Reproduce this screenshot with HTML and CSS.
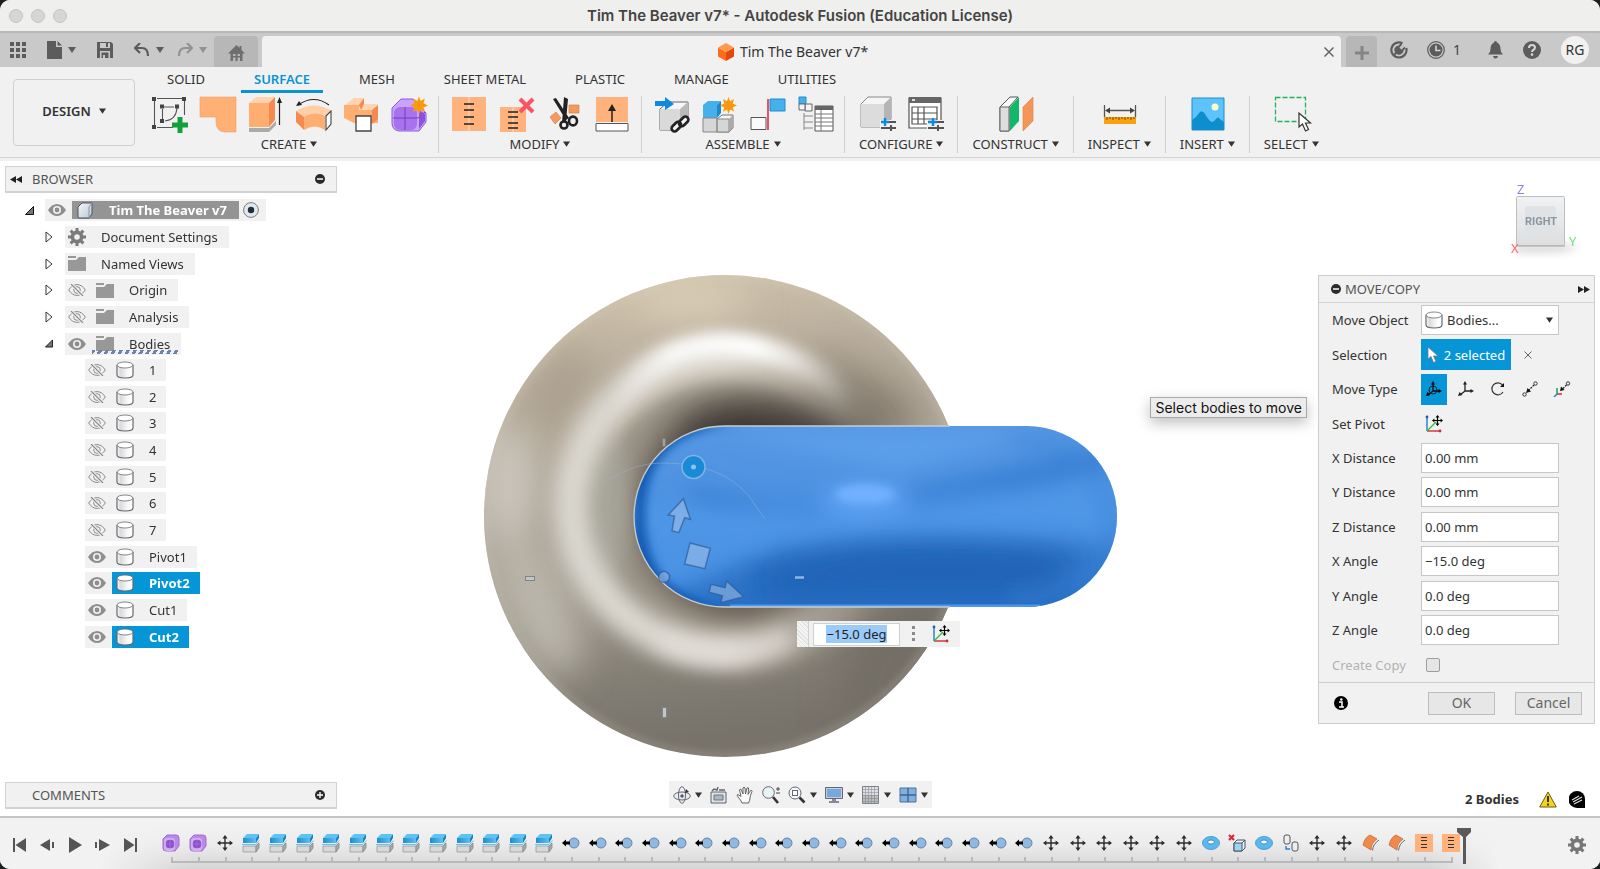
FILE: index.html
```html
<!DOCTYPE html>
<html lang="en">
<head>
<meta charset="utf-8">
<title>Tim The Beaver v7* - Autodesk Fusion (Education License)</title>
<link rel="stylesheet" href="styles.css">
</head>
<body>
<svg class="defs" aria-hidden="true">
  <defs>
    <linearGradient id="gBlue" x1="0" y1="0" x2="1" y2="0"><stop offset="0" stop-color="#1b8fd0"/><stop offset="1" stop-color="#5cc0f0"/></linearGradient>
    <linearGradient id="gCyl" x1="0" y1="0" x2="1" y2="0"><stop offset="0" stop-color="#fff"/><stop offset=".2" stop-color="#d9dadd"/><stop offset=".7" stop-color="#fbfbfb"/><stop offset="1" stop-color="#fff"/></linearGradient>
    <linearGradient id="gCube" x1="0" y1="0" x2="1" y2="1"><stop offset="0" stop-color="#f4f7fa"/><stop offset="1" stop-color="#b9c6d4"/></linearGradient>
  </defs>
  <symbol id="caret" viewBox="0 0 8 6"><path d="M0 0h8L4 6z" fill="currentColor"/></symbol>
  <symbol id="eye" viewBox="0 0 18 12"><path d="M0 6C5-2 13-2 18 6 13 14 5 14 0 6z" fill="#8e8e8e"/><circle cx="9" cy="6" r="4" fill="#f1f1f1"/><circle cx="9" cy="6" r="2.400" fill="#8e8e8e"/></symbol>
  <symbol id="eyeoff" viewBox="0 0 18 12"><path d="M.7 6C5-1.2 13-1.2 17.300 6 13 13.200 5 13.200.7 6z" fill="none" stroke="#8a8a8a"/><circle cx="9" cy="6" r="3.300" fill="none" stroke="#8a8a8a"/><path d="M3 0l12 12" stroke="#f1f1f1" stroke-width="3"/><path d="M3 0l12 12" stroke="#8a8a8a" stroke-width="1.200"/></symbol>
  <symbol id="folder" viewBox="0 0 18 15"><path d="M0 0h8v2H0zM0 4h8l3-3h7v14H0z" fill="#989898"/></symbol>
  <symbol id="cyl" viewBox="0 0 18 18"><path d="M1 4v10c0 4 16 4 16 0V4" fill="url(#gCyl)" stroke="#66696d" stroke-width="1.200"/><ellipse cx="9" cy="4" rx="8" ry="3" fill="#fff" stroke="#66696d" stroke-width=".8"/></symbol>
  <symbol id="closed" viewBox="0 0 8 12"><path d="M1 1l6 5-6 5z" fill="#fff" stroke="#333" stroke-width="1"/></symbol>
  <symbol id="open" viewBox="0 0 9 9"><path d="M8.500 .5v8H.5z" fill="#777" stroke="#111"/></symbol>
  <symbol id="gear" viewBox="0 0 18 18"><circle cx="9" cy="9" r="4.600" fill="none" stroke="currentColor" stroke-width="3.600"/><path d="M9 0v4M9 14v4M0 9h4M14 9h4M2.600 2.600l3 3M12.400 12.400l3 3M2.600 15.400l3-3M12.400 5.600l3-3" stroke="currentColor" stroke-width="3"/></symbol>
  <symbol id="move" viewBox="0 0 16 16"><path d="M8 2v12M2 8h12" stroke="#2b2b2b" stroke-width="1.400"/><path d="M8 0l2.600 3.400H5.400zM8 16l2.600-3.400H5.400zM0 8l3.400-2.600v5.200zM16 8l-3.400-2.600v5.200z" fill="#2b2b2b"/></symbol>
  <symbol id="form" viewBox="0 0 18 18"><path d="M5 1h9q3 0 3 3v8l-4 5H4q-3 0-3-3V5z" fill="#b98ae6" stroke="#9d6bd2"/><rect x="2" y="4" width="11" height="13" rx="3" fill="#cfaef2"/><rect x="4" y="6" width="8" height="8" rx="2.500" fill="#8e50cc"/><path d="M8 5v10M3 10h10" stroke="#a874dc" stroke-width=".7"/></symbol>
  <symbol id="split" viewBox="0 0 18 20"><path d="M1 5h13v5H1z" fill="url(#gBlue)"/><path d="M14 5l3-4v4l-3 5z" fill="#1583c4"/><path d="M5 1h12l-3 4H1z" fill="#5ec2f2"/><path d="M0 11.500h14l3.500-4" fill="none" stroke="#6cc0ec"/><path d="M1 13h13v6H1z" fill="#d8d8d8" stroke="#999" stroke-width=".8"/><path d="M14 13l3-3v5l-3 4z" fill="#aaa" stroke="#888" stroke-width=".8"/></symbol>
  <symbol id="joint" viewBox="0 0 18 12"><circle cx="12" cy="6" r="5" fill="#8fb8e3" stroke="#6385a8"/><path d="M0 6l4-3.500v2h4v3H4v2z" fill="#000"/></symbol>
  <symbol id="torus" viewBox="0 0 18 14"><ellipse cx="9" cy="7" rx="8.500" ry="6.500" fill="#5bb8ee" stroke="#2f94d0" stroke-width=".8"/><ellipse cx="9" cy="6" rx="3.400" ry="2" fill="#fff" stroke="#2277ad" stroke-width=".8"/></symbol>
  <symbol id="remove" viewBox="0 0 18 18"><path d="M1 1l5 5M6 1L1 6" stroke="#d22b3a" stroke-width="2.200"/><path d="M6 9l3-3h8v8l-3 3H6z" fill="#eef3f7" stroke="#456"/><path d="M6 9h8v8H6z" fill="#9ed3f2" stroke="#456"/><path d="M14 9l3-3" stroke="#456"/></symbol>
  <symbol id="copy" viewBox="0 0 18 18"><rect x="2" y="1" width="6" height="9" rx="2" fill="#eee" stroke="#555"/><rect x="10" y="8" width="6" height="9" rx="2" fill="#eee" stroke="#555"/><path d="M4 12v3h4" fill="none" stroke="#2f7fc8" stroke-width="1.400"/></symbol>
  <symbol id="patch" viewBox="0 0 18 18"><path d="M1 11Q3 3 8 1l7 4Q9 9 9 16z" fill="#f08a4a" stroke="#c96a30" stroke-width=".8"/><path d="M10.500 16.500Q11 10 17 6" fill="none" stroke="#666"/></symbol>
  <symbol id="stitch" viewBox="0 0 36 36"><path d="M1 1h34v34H1z" fill="#ffb27c"/><path d="M18 1v34" stroke="#f6ddc9"/><path d="M13 8h10M13 14h10M13 21h10M13 28h10" stroke="#222" stroke-width="1.600"/></symbol>
  <symbol id="stitchsm" viewBox="0 0 18 18"><path d="M0 0h18v18H0z" fill="#ffb27c"/><path d="M6 3.500h6M6 6.500h6M6 10.500h6M6 13.500h6" stroke="#333" stroke-width="1"/></symbol>
  <symbol id="pivot" viewBox="0 0 18 18"><path d="M2 16V2" stroke="#1f7fd0" stroke-width="1.400"/><circle cx="2" cy="2" r="1.400" fill="#1f5fae"/><path d="M2 16h13" stroke="#d2283c" stroke-width="1.400"/><circle cx="15" cy="16" r="1.400" fill="#d2283c"/><path d="M2 16L11 7" stroke="#2fc02f" stroke-width="1.200"/><path d="M12.500 1v9M8 5.500h9" stroke="#000" stroke-width="1.200"/><path d="M12.500 0l2 2.400h-4zM12.500 11l2-2.400h-4zM7 5.500l2.400-2v4zM18 5.500l-2.400-2v4z"/></symbol>
  <symbol id="star" viewBox="0 0 16 16"><path d="M8 0l1.500 4 3.700-2.200L12 6l4 2-4 1.700 1.300 4-3.800-2L8 16l-1.500-4.200-3.800 2 1.300-4L0 8l4-2-1.200-4.200L6.500 4z" fill="#f89a0c"/></symbol>
</svg>

<header class="titlebar">
  <div class="lights"><i></i><i></i><i></i></div>
  <h1>Tim The Beaver v7* - Autodesk Fusion (Education License)</h1>
</header>

<div class="appbar">
  <div class="quick">
    <button class="q" aria-label="Data panel"><svg width="16" height="16"><path d="M0 0h4v4H0zM6 0h4v4H6zM12 0h4v4h-4zM0 6h4v4H0zM6 6h4v4H6zM12 6h4v4h-4zM0 12h4v4H0zM6 12h4v4H6zM12 12h4v4h-4z" fill="#5c5c5c"/></svg></button>
    <button class="q file" aria-label="File"><svg width="15" height="18"><path d="M0 0h9v6h6v12H0z M10.500 0L15 4.500h-4.500z" fill="#5c5c5c"/></svg><svg class="car" width="8" height="6"><use href="#caret"/></svg></button>
    <button class="q save" aria-label="Save"><svg width="16" height="16"><path d="M0 0h14l2 2v14H0z" fill="#5c5c5c"/><path d="M3 1h10v5H3zM3 9h10v7H3z" fill="#c9c9c9"/><path d="M4.500 10.500h7V16H8v-3H6v3H4.500z" fill="#5c5c5c"/><path d="M9 1h2v4H9z" fill="#5c5c5c"/></svg></button>
    <button class="q undo" aria-label="Undo"><svg width="16" height="14"><path d="M1 5h7q6 0 6 8" fill="none" stroke="#5c5c5c" stroke-width="2.200"/><path d="M6 0L1 5l5 5" fill="none" stroke="#5c5c5c" stroke-width="2.200"/></svg><svg class="car" width="8" height="6"><use href="#caret"/></svg></button>
    <button class="q redo" aria-label="Redo"><svg width="16" height="14"><path d="M15 5H8q-6 0-6 8" fill="none" stroke="#929292" stroke-width="2.200"/><path d="M10 0l5 5-5 5" fill="none" stroke="#929292" stroke-width="2.200"/></svg><svg class="car" width="8" height="6"><use href="#caret"/></svg></button>
  </div>
  <button class="home" aria-label="Home"><svg width="17" height="16"><path d="M8.500 0l3 3V1h2v4L17 8.500h-2.500V16h-12V8.500H0z" fill="#6e6e6e"/><path d="M5 9h2.500v2H5zM9.500 9H12v2H9.500zM5 12.500h2.500V16H5zM9.500 12.500H12V16H9.500z" fill="#b7b7b7"/></svg></button>
  <div class="doctab">
    <span class="docname"><svg width="16" height="18"><path d="M0 4.500L8 9v9l-8-4.500z" fill="#ff6a1c"/><path d="M16 4.500L8 9v9l8-4.500z" fill="#e4480a"/><path d="M8 0l8 4.500L8 9 0 4.500z" fill="#ff9a4d"/></svg>Tim The Beaver v7*</span>
    <button class="x" aria-label="Close tab"><svg width="10" height="10"><path d="M.5.5l9 9M9.500.5l-9 9" stroke="#666" stroke-width="1.500"/></svg></button>
  </div>
  <button class="plus" aria-label="New tab"><svg width="14" height="14"><path d="M7 0v14M0 7h14" stroke="#858585" stroke-width="3"/></svg></button>
  <div class="account">
    <button class="q ext" aria-label="Extensions"><svg width="18" height="18"><path d="M12.500 2.200A7.600 7.600 0 1 0 16.300 7" fill="none" stroke="#5c5c5c" stroke-width="2.200"/><g transform="rotate(45 9 9)"><path d="M4.500 7h9v2q0 4.500-4.500 4.500T4.500 9z" fill="#5c5c5c"/><path d="M6.500 7.500V3M11.500 7.500V3M9 13v4" stroke="#5c5c5c" stroke-width="2"/></g></svg></button>
    <button class="q jobs" aria-label="Job status"><svg width="18" height="18"><circle cx="9" cy="9" r="8.300" fill="none" stroke="#5c5c5c" stroke-width="1.200"/><circle cx="9" cy="9" r="6.500" fill="#5c5c5c"/><path d="M9 4.500V9.500h4.500" fill="none" stroke="#d5d5d5" stroke-width="1.600"/></svg><span>1</span></button>
    <button class="q bell" aria-label="Notifications"><svg width="15" height="18"><path d="M7.500 0q1.500 0 1.500 1.500Q12.500 3 12.500 8q0 3.500 2.500 5.500H0Q2.500 11.500 2.500 8 2.500 3 6 1.500 6 0 7.500 0zM5 15h5q-.5 2.500-2.500 2.500T5 15z" fill="#5c5c5c"/></svg></button>
    <button class="q" aria-label="Help"><svg width="18" height="18"><circle cx="9" cy="9" r="9" fill="#5c5c5c"/><path d="M6 7q0-3 3-3t3 2.600Q12 8.200 10.300 9 9 9.700 9 11" fill="none" stroke="#d5d5d5" stroke-width="2"/><circle cx="9" cy="13.600" r="1.300" fill="#d5d5d5"/></svg></button>
    <button class="avatar">RG</button>
  </div>
</div>

<section class="ribbon">
  <button class="design">DESIGN<svg width="7" height="6"><use href="#caret"/></svg></button>
  <div class="tools">
    <nav class="tabs">
      <a href="#solid">SOLID</a><a href="#surface" class="on">SURFACE</a><a href="#mesh">MESH</a><a href="#sheet">SHEET METAL</a><a href="#plastic">PLASTIC</a><a href="#manage">MANAGE</a><a href="#utilities">UTILITIES</a>
    </nav>
    <div class="panels">
      <div class="panel">
        <div class="icons">
          <button aria-label="Create sketch"><svg viewBox="0 0 36 36"><path d="M5 2.500h25M2.500 5v24M32.500 5v14M5 31.500h16M12 11h10M10.500 13v10M25 12q-1 12-12 13" fill="none" stroke="#555" stroke-width="1.100"/><path d="M0 1h4v4H0zM30 1h4v4h-4zM0 29h4v4H0zM8 8.500h4v4H8zM23 8.500h4v4h-4zM8 23h4v4H8z" fill="#444"/><path d="M25.500 21h5v5.500H36v5h-5.500V37h-5v-5.500H20v-5h5.500z" fill="#12a13c"/></svg></button>
          <button aria-label="Patch"><svg viewBox="0 0 36 36"><path d="M0 1h36v35H24q-8-1-8-10v-5H0z" fill="#ffb075" stroke="#f0a065" stroke-width=".6"/></svg></button>
          <button aria-label="Extrude"><svg viewBox="0 0 36 36"><path d="M1 32h20l7-7v4l-7 7H1z" fill="#aaa"/><path d="M1 7h20v24H1z" fill="#ffae72"/><path d="M1 7l7-6h19l-6 6z" fill="#ffd4ae"/><path d="M21 7l6-6v23l-6 7z" fill="#f58a50"/><path d="M31.500 29V4" stroke="#222" stroke-width="1.200"/><path d="M31.500 1l2.500 6h-5z" fill="#222"/></svg></button>
          <button aria-label="Revolve"><svg viewBox="0 0 36 36"><path d="M2 9Q18-2 33 9" fill="none" stroke="#222" stroke-width="1.200"/><path d="M0 10l3-5 3 4z" fill="#222"/><path d="M0 15Q18 4 36 15l-6 5Q18 14 8 21z" fill="#ffcfa6"/><path d="M8 21q11-7 21-1v14q-10-7-21 0z" fill="#ffae72"/><path d="M0 15l8 6v13l-8-8z" fill="#f58a50"/><path d="M30 20l5-5v13l-5 6z" fill="#fff" stroke="#444" stroke-width="1.100"/></svg></button>
          <button aria-label="Loft"><svg viewBox="0 0 36 36"><path d="M1 9L10 2h10v6h14L28 14H12z" fill="#ffd4ae"/><path d="M0 9h15v5h13l6-5v18H10L0 22z" fill="#ffae72"/><path d="M28 14l6-5v14l-6 5z" fill="#f58a50"/><path d="M15 9l5-7v6l-3 6z" fill="#f58a50"/><path d="M12 20h15v15H12z" fill="#fff" stroke="#444" stroke-width="1.300"/></svg></button>
          <button aria-label="Create form"><svg viewBox="0 0 36 36"><path d="M9 3h12l13 14v9l-7 9H7q-7-1-7-8V12z" fill="#c9a3ff" stroke="#8d5cd8"/><rect x="2" y="11" width="23" height="23" rx="6" fill="#a872ec"/><path d="M13 11v23M1 22h25l7-6" fill="none" stroke="#6f3fc0"/><path d="M27 14l6 4v7l-6 8z" fill="#8d52da"/><svg x="18" y="0" width="18" height="19"><use href="#star"/></svg></svg></button>
        </div>
        <button class="label">CREATE<svg width="7" height="6"><use href="#caret"/></svg></button>
      </div>
      <div class="panel">
        <div class="icons">
          <button aria-label="Stitch"><svg><use href="#stitch"/></svg></button>
          <button aria-label="Unstitch"><svg viewBox="0 0 36 36"><path d="M1 11h26v25H1z" fill="#ffb27c"/><path d="M14 11v25" stroke="#f6ddc9"/><path d="M9 16h10M9 21h10M9 27h10M9 32h10" stroke="#222" stroke-width="1.500"/><path d="M21 3l13 13M34 3L21 16" stroke="#fb5361" stroke-width="4"/></svg></button>
          <button aria-label="Trim"><svg viewBox="0 0 36 36"><path d="M22 9h10v8H22zM3 21l6-5 5 6-6 6z" fill="#f29a60" stroke="#d78347" stroke-width=".7"/><path d="M6 3l3-1 13 20-3 2zM17 1l4 2-2 22-4 2z" fill="#222"/><circle cx="17" cy="29" r="3.500" fill="#f1f1f1" stroke="#222" stroke-width="2.600"/><ellipse cx="26" cy="25" rx="4" ry="4.400" fill="#f1f1f1" stroke="#222" stroke-width="2.600"/></svg></button>
          <button aria-label="Extend"><svg viewBox="0 0 36 36"><path d="M1 1h32v25H1z" fill="#ffb27c"/><path d="M1 27.500h32V35H1z" fill="#fff" stroke="#555"/><path d="M17 26V11" stroke="#222" stroke-width="1.500"/><path d="M17 8l4 7h-8z" fill="#222"/></svg></button>
        </div>
        <button class="label">MODIFY<svg width="7" height="6"><use href="#caret"/></svg></button>
      </div>
      <div class="panel">
        <div class="icons">
          <button aria-label="Insert derive"><svg viewBox="0 0 36 36"><path d="M6 13l8-7h20v18l-7 10H6z" fill="#f6f6f6" stroke="#666"/><path d="M6 13h20v21H6z" fill="#d9d9d9"/><path d="M26 13l8-7v18l-8 10z" fill="#b9b9b9"/><path d="M1 5h10V1l9 7-9 6v-4H1z" fill="#0d8ae0"/><rect x="17" y="25" width="20" height="8" rx="3" transform="rotate(-45 27 29)" fill="#f1f1f1"/><g fill="none" stroke="#222" stroke-width="2.600"><rect x="17" y="28" width="11" height="6" rx="3" transform="rotate(-45 22 31)"/><rect x="24" y="22" width="11" height="6" rx="3" transform="rotate(-45 30 25)"/></g></svg></button>
          <button aria-label="New component"><svg viewBox="0 0 36 36"><path d="M1 9l5-4h13l-4 4v13H1z" fill="#45b0ea"/><path d="M15 9l4-4v12l-4 5z" fill="#1d88c8"/><path d="M15 23l5-4h11v13l-4 4H15z" fill="#f4f4f4" stroke="#777"/><path d="M1 22h14v14H1zM15 23h12v13H15z" fill="#d6d6d6" stroke="#888"/><path d="M27 23l4-4v13l-4 4z" fill="#aaa"/><svg x="18" y="0" width="17" height="19"><use href="#star"/></svg></svg></button>
          <button aria-label="Joint"><svg viewBox="0 0 36 36"><path d="M1 21.500h15v12H1z" fill="#fafafa" stroke="#555"/><path d="M20 3h15v12H20z" fill="#45b0ea" stroke="#1b8fd0"/><path d="M18 3v31" stroke="#e0203c" stroke-width="1.500"/></svg></button>
          <button aria-label="Component table"><svg viewBox="0 0 36 36"><path d="M7 8h7v7H7z" fill="#f4f4f4" stroke="#666"/><path d="M1 1h7v7H1z" fill="#45b0ea" stroke="#1b8fd0"/><path d="M1 8h6v6H1z" fill="#f4f4f4" stroke="#666"/><path d="M6 17v17M6 20h9M6 26h9M6 32h9" fill="none" stroke="#888"/><path d="M17 10h18v25H17z" fill="#fff" stroke="#555"/><path d="M17 10h18v4H17z" fill="#666"/><path d="M17 18h18M17 22h18M17 26h18M17 30h18M23 14v21" stroke="#777"/></svg></button>
        </div>
        <button class="label">ASSEMBLE<svg width="7" height="6"><use href="#caret"/></svg></button>
      </div>
      <div class="panel">
        <div class="icons">
          <button aria-label="Configure"><svg viewBox="0 0 36 36"><path d="M1 8l7-7h23v22l-7 8H1z" fill="#f5f5f5" stroke="#888"/><path d="M1 8h23v23H1z" fill="#dcdcdc"/><path d="M24 8l7-7v22l-7 8z" fill="#b5b5b5"/><path d="M20 24h17v12H20z" fill="#f1f1f1"/><path d="M28 26h8M21 32h15M31 29v6" stroke="#555" stroke-width="2"/><path d="M21 26h8M25 22v8" stroke="#0d8ae0" stroke-width="2.400"/></svg></button>
          <button aria-label="Configuration table"><svg viewBox="0 0 36 36"><path d="M1 2h32v30H1z" fill="#fff" stroke="#555" stroke-width="1.200"/><path d="M1 1h32v6H1z" fill="#666"/><path d="M4 3h3v2H4z" fill="#ddd"/><path d="M4 11h25v17H4zM4 17h25M4 23h25M10 11v17M16 11v17" fill="none" stroke="#555" stroke-width="1.200"/><path d="M19 24h18v12H19z" fill="#f1f1f1"/><path d="M28 26h8M20 32h16M30 29v6" stroke="#555" stroke-width="2"/><path d="M20 26h9M25 22v8" stroke="#0d8ae0" stroke-width="2.400"/></svg></button>
        </div>
        <button class="label">CONFIGURE<svg width="7" height="6"><use href="#caret"/></svg></button>
      </div>
      <div class="panel">
        <div class="icons"><button aria-label="Offset plane"><svg viewBox="0 0 36 36"><path d="M1 11L11 1h8L10 11v24H1z" fill="#f8f8f8" stroke="#555"/><path d="M1 11h9v24H1z" fill="#dedede" stroke="#666"/><path d="M11 11L20 1v24l-9 10z" fill="#12b869"/><path d="M24 11L34 1v24L24 35z" fill="#f49658" stroke="#e08040" stroke-width=".6"/></svg></button></div>
        <button class="label">CONSTRUCT<svg width="7" height="6"><use href="#caret"/></svg></button>
      </div>
      <div class="panel">
        <div class="icons"><button aria-label="Measure"><svg viewBox="0 0 36 36"><path d="M2.500 9v12M33.500 9v12M5 14.500h26" stroke="#555" stroke-width="1.300"/><path d="M3 14.500l5-3v6zM33 14.500l-5-3v6z" fill="#444"/><path d="M2 21h32v7H2z" fill="#fa9f0e"/><path d="M5 21v3M8 21v2M11 21v3M14 21v2M17 21v3M20 21v2M23 21v3M26 21v2M29 21v3M32 21v2" stroke="#6a4300" stroke-width=".9"/></svg></button></div>
        <button class="label">INSPECT<svg width="7" height="6"><use href="#caret"/></svg></button>
      </div>
      <div class="panel">
        <div class="icons"><button aria-label="Insert canvas"><svg viewBox="0 0 36 36"><path d="M2 2h32v32H2z" fill="#5ec3fb"/><circle cx="25" cy="11" r="3.500" fill="#fffcd0"/><path d="M2 24q4-2 7-7 3-4 6 1 4 7 7 8 2 0 4-3 2-3 4 0l4 3v8H2z" fill="#0c8fcc"/><path d="M2 2h32v32H2z" fill="none" stroke="#1b8fd0"/></svg></button></div>
        <button class="label">INSERT<svg width="7" height="6"><use href="#caret"/></svg></button>
      </div>
      <div class="panel">
        <div class="icons"><button aria-label="Select"><svg viewBox="0 0 36 36"><path d="M1.500 1.500h30v24h-30z" fill="none" stroke="#21b35c" stroke-width="1.300" stroke-dasharray="5 2"/><path d="M25 17v14l3.500-3 3 7 3-1.500-3-6.500h5z" fill="#fff" stroke="#333" stroke-width="1.200"/></svg></button></div>
        <button class="label">SELECT<svg width="7" height="6"><use href="#caret"/></svg></button>
      </div>
    </div>
  </div>
</section>

<main class="viewport">
  <svg class="model" viewBox="0 161 1600 655" aria-hidden="true">
    <defs>
      <clipPath id="disc"><circle cx="725" cy="516" r="241"/></clipPath>
      <clipPath id="pill"><rect x="634" y="426" width="483" height="181" rx="90.500"/></clipPath>
      <linearGradient id="disc1" x1="0" y1="0" x2=".15" y2="1"><stop offset="0" stop-color="#d6c9b0"/><stop offset=".25" stop-color="#b9ae9d"/><stop offset=".6" stop-color="#aaa498"/><stop offset=".85" stop-color="#858076"/><stop offset="1" stop-color="#77726a"/></linearGradient>
      <linearGradient id="ringL" x1="0" y1="0" x2="1" y2="0"><stop offset="0" stop-color="#dad8d0"/><stop offset=".5" stop-color="#dfdad2"/><stop offset=".8" stop-color="#b9b1a5" stop-opacity=".5"/><stop offset="1" stop-color="#a89f92" stop-opacity="0"/></linearGradient>
      <linearGradient id="arcT" gradientUnits="userSpaceOnUse" x1="610" y1="0" x2="850" y2="0"><stop offset="0" stop-color="#fff" stop-opacity="0"/><stop offset=".25" stop-color="#fff" stop-opacity=".85"/><stop offset=".6" stop-color="#fff"/><stop offset="1" stop-color="#fff" stop-opacity="0"/></linearGradient>
      <radialGradient id="hole"><stop offset="0" stop-color="#2e2a26"/><stop offset=".55" stop-color="#47413b"/><stop offset=".8" stop-color="#857c71"/><stop offset="1" stop-color="#a9a296" stop-opacity="0"/></radialGradient>
      <linearGradient id="blue1" x1="0" y1="0" x2="0" y2="1"><stop offset="0" stop-color="#5697e3"/><stop offset=".5" stop-color="#4a90e0"/><stop offset=".75" stop-color="#347bcf"/><stop offset="1" stop-color="#2c74ca"/></linearGradient>
      <filter id="b4" x="-50%" y="-100%" width="200%" height="300%"><feGaussianBlur stdDeviation="4"/></filter>
      <filter id="b7" x="-50%" y="-150%" width="200%" height="400%"><feGaussianBlur stdDeviation="7"/></filter>
      <filter id="b10" x="-50%" y="-150%" width="200%" height="400%"><feGaussianBlur stdDeviation="10"/></filter>
      <filter id="b18" x="-100%" y="-100%" width="300%" height="300%"><feGaussianBlur stdDeviation="18"/></filter>
    </defs>
    <g clip-path="url(#disc)">
      <rect x="480" y="270" width="490" height="490" fill="url(#disc1)"/>
      <g filter="url(#b18)">
        <ellipse cx="508" cy="485" rx="22" ry="60" fill="#cfcac2"/>
        <ellipse cx="560" cy="390" rx="20" ry="50" fill="#a99e8c" transform="rotate(30 560 390)"/>
        <ellipse cx="540" cy="610" rx="30" ry="70" fill="#bcb7ac" transform="rotate(-25 540 610)"/>
        <ellipse cx="690" cy="300" rx="60" ry="20" fill="#d8ccb6"/>
        <ellipse cx="900" cy="660" rx="50" ry="90" fill="#736e66" transform="rotate(30 900 660)"/>
        <ellipse cx="860" cy="400" rx="70" ry="30" fill="#8d8476" transform="rotate(25 860 400)"/>
      </g>
      <ellipse cx="728" cy="508" rx="130" ry="126" fill="#938c80" filter="url(#b10)"/>
      <ellipse cx="738" cy="510" rx="132" ry="138" fill="url(#hole)" filter="url(#b4)"/>
      <ellipse cx="780" cy="436" rx="100" ry="34" fill="#37322d" opacity=".75" filter="url(#b18)"/>
      <ellipse cx="608" cy="505" rx="20" ry="76" fill="#a8a79d" opacity=".85" filter="url(#b10)"/>
      <ellipse cx="730" cy="505" rx="159" ry="147" fill="none" stroke="url(#ringL)" stroke-width="34" filter="url(#b10)"/>
      <path d="M605 410Q650 346 722 344Q790 346 850 395" fill="none" stroke="url(#arcT)" stroke-width="24" filter="url(#b7)"/>
      <path d="M660 640Q722 668 790 636" fill="none" stroke="#e4e0dc" stroke-width="14" filter="url(#b10)"/>
      <circle cx="725" cy="516" r="240" fill="none" stroke="#e0d9c9" stroke-width="4" opacity=".4" filter="url(#b4)"/>
    </g>
    <g clip-path="url(#pill)">
      <rect x="634" y="426" width="483" height="181" fill="url(#blue1)"/>
      <path d="M750 568Q880 520 1080 550L1060 602H750z" fill="#1a5fb2" opacity=".85" filter="url(#b18)"/>
      <g filter="url(#b10)">
        <path d="M690 485Q800 520 910 490L1110 445V470L930 515Q800 530 690 500z" fill="#3079ce" opacity=".7"/>
        <path d="M640 500Q760 515 870 505L1117 480V540Q900 520 780 545L650 600z" fill="#4f97e8" opacity=".85"/>
        <path d="M720 432H1030L900 470z" fill="#5c9fea"/>
        <path d="M1010 440Q1100 440 1108 516T1010 596" fill="none" stroke="#3a83d6" stroke-width="10" opacity=".7"/>
        <ellipse cx="865" cy="500" rx="44" ry="18" fill="#5b9ff0"/>
      </g>
      <ellipse cx="865" cy="494" rx="30" ry="10" fill="#72b1ff" filter="url(#b4)"/>
      <path d="M745 426Q645 426 645 516T745 607H634V426z" fill="#0c57ae" filter="url(#b4)" opacity=".9"/>
      <path d="M730 606H1040" stroke="#4c97f2" stroke-width="3"/>
    </g>
    <path d="M950 426H724.500A90.500 90.500 0 0 0 724.500 607H950" fill="none" stroke="#c9cbcb" stroke-width="1.300"/>
    <g fill="#b9cbe6" fill-opacity=".45" stroke="#2b5795" stroke-opacity=".65" stroke-width="1.500">
      <path d="M683.400 498.700L690.500 519.300 684.700 517.700 678.800 532.700 672 530.700 674.500 516 668.200 515z"/>
      <path d="M690 543L710.300 548.300 704.900 568.700 684.600 564z"/>
      <path d="M743.600 596.700L720.800 602.700 722.500 595.700 709 592.300 711 584.300 725 587.700 726.700 581z"/>
      <circle cx="664" cy="577" r="5.500"/>
    </g>
    <path d="M607 481Q636 462 664 463Q720 463 748 495L765 519" fill="none" stroke="#9fb4cc" stroke-opacity=".45"/>
    <circle cx="693.500" cy="467" r="11.500" fill="#1b8ad6" stroke="#7fb4e6" stroke-width="1.500"/>
    <circle cx="693.500" cy="467" r="2.500" fill="#8fc2ee"/>
    <g fill="#c3c6c4" stroke="#7f8484" stroke-width="1"><rect x="525.500" y="576.500" width="9" height="4"/><rect x="662.500" y="707.500" width="4" height="10"/><rect x="662.500" y="438.500" width="3" height="8" opacity=".6"/></g>
    <path d="M795 577.500h9" stroke="#8fb5e4" stroke-width="2.500"/>
  </svg>

  <div class="floatbox">
    <span class="grip"></span>
    <span class="field"><input type="text" aria-label="Angle" value="−15.0 deg"></span>
    <button class="dots" aria-label="More"><svg width="4" height="16"><path d="M0 0h3v3H0zM0 6h3v3H0zM0 12h3v3H0z" fill="#8a8a8a"/></svg></button>
    <button class="dots" aria-label="Set pivot"><svg width="18" height="18"><use href="#pivot"/></svg></button>
  </div>
  <div class="tip" role="tooltip">Select bodies to move</div>

  <div class="upper">
    <aside class="browser">
      <div class="bar"><svg width="12" height="7"><path d="M6 0v7L0 3.500zM12 0v7L6 3.500z" fill="#222"/></svg><span>BROWSER</span><button aria-label="Minimize"><svg width="10" height="10"><circle cx="5" cy="5" r="5" fill="#2b2b2b"/><path d="M2 5h6" stroke="#fff" stroke-width="1.500"/></svg></button></div>
      <ul class="tree">
        <li class="l0"><svg class="tw" width="9" height="9"><use href="#open"/></svg><div class="row"><svg class="ey" width="18" height="12"><use href="#eye"/></svg><b class="root"><svg width="16" height="17"><path d="M1 5l4-4h10v11l-3 4H2l-1-1z" fill="url(#gCube)" stroke="#4d5660"/><path d="M12 5l3-4M12 5v11" stroke="#8b97a4"/></svg>Tim The Beaver v7</b><svg class="act" width="16" height="16"><circle cx="8" cy="8" r="7.400" fill="#e2e8ef" stroke="#767c84"/><circle cx="8" cy="8" r="3.200" fill="#222c3a"/></svg></div></li>
        <li class="l1"><svg class="tw" width="8" height="12"><use href="#closed"/></svg><div class="row"><svg class="fo g" width="18" height="18"><use href="#gear"/></svg><span>Document Settings</span></div></li>
        <li class="l1"><svg class="tw" width="8" height="12"><use href="#closed"/></svg><div class="row"><svg class="fo" width="18" height="15"><use href="#folder"/></svg><span>Named Views</span></div></li>
        <li class="l1"><svg class="tw" width="8" height="12"><use href="#closed"/></svg><div class="row"><svg class="ey" width="18" height="12"><use href="#eyeoff"/></svg><svg class="fo" width="18" height="15"><use href="#folder"/></svg><span>Origin</span></div></li>
        <li class="l1"><svg class="tw" width="8" height="12"><use href="#closed"/></svg><div class="row"><svg class="ey" width="18" height="12"><use href="#eyeoff"/></svg><svg class="fo" width="18" height="15"><use href="#folder"/></svg><span>Analysis</span></div></li>
        <li class="l1"><svg class="tw" width="9" height="9"><use href="#open"/></svg><div class="row mark"><svg class="ey" width="18" height="12"><use href="#eye"/></svg><svg class="fo" width="18" height="15"><use href="#folder"/></svg><span>Bodies</span></div></li>
        <li class="l2"><div class="row"><svg class="ey" width="18" height="12"><use href="#eyeoff"/></svg><div class="body"><svg width="18" height="18"><use href="#cyl"/></svg>1</div></div></li>
        <li class="l2"><div class="row"><svg class="ey" width="18" height="12"><use href="#eyeoff"/></svg><div class="body"><svg width="18" height="18"><use href="#cyl"/></svg>2</div></div></li>
        <li class="l2"><div class="row"><svg class="ey" width="18" height="12"><use href="#eyeoff"/></svg><div class="body"><svg width="18" height="18"><use href="#cyl"/></svg>3</div></div></li>
        <li class="l2"><div class="row"><svg class="ey" width="18" height="12"><use href="#eyeoff"/></svg><div class="body"><svg width="18" height="18"><use href="#cyl"/></svg>4</div></div></li>
        <li class="l2"><div class="row"><svg class="ey" width="18" height="12"><use href="#eyeoff"/></svg><div class="body"><svg width="18" height="18"><use href="#cyl"/></svg>5</div></div></li>
        <li class="l2"><div class="row"><svg class="ey" width="18" height="12"><use href="#eyeoff"/></svg><div class="body"><svg width="18" height="18"><use href="#cyl"/></svg>6</div></div></li>
        <li class="l2"><div class="row"><svg class="ey" width="18" height="12"><use href="#eyeoff"/></svg><div class="body"><svg width="18" height="18"><use href="#cyl"/></svg>7</div></div></li>
        <li class="l2"><div class="row"><svg class="ey" width="18" height="12"><use href="#eye"/></svg><div class="body"><svg width="18" height="18"><use href="#cyl"/></svg>Pivot1</div></div></li>
        <li class="l2"><div class="row"><svg class="ey" width="18" height="12"><use href="#eye"/></svg><div class="body sel"><svg width="18" height="18"><use href="#cyl"/></svg>Pivot2</div></div></li>
        <li class="l2"><div class="row"><svg class="ey" width="18" height="12"><use href="#eye"/></svg><div class="body"><svg width="18" height="18"><use href="#cyl"/></svg>Cut1</div></div></li>
        <li class="l2"><div class="row"><svg class="ey" width="18" height="12"><use href="#eye"/></svg><div class="body sel"><svg width="18" height="18"><use href="#cyl"/></svg>Cut2</div></div></li>
      </ul>
    </aside>

    <div class="right">
      <svg class="cube" width="90" height="82" viewBox="0 0 90 82">
        <defs><linearGradient id="cf" x1="0" y1="0" x2="0" y2="1"><stop offset="0" stop-color="#f0f1f2"/><stop offset="1" stop-color="#dcdedf"/></linearGradient></defs>
        <path d="M14 68h58l6 3-20 4H16z" fill="#999" opacity=".45" filter="url(#b4)"/>
        <rect x="16.500" y="19.500" width="48" height="49" rx="1" fill="url(#cf)" stroke="#bcbfc1"/>
        <rect x="25" y="29" width="31" height="29" rx="3" fill="#dfe3e6"/>
        <path d="M16 69h49" stroke="#aaa"/>
        <text class="face" x="41" y="48" text-anchor="middle">RIGHT</text>
        <text class="axis" x="17" y="17" fill="#8a84ea">Z</text><text class="axis" x="11" y="76" fill="#ff6a6a">X</text><text class="axis" x="69" y="69" fill="#72e07c">Y</text>
      </svg>
      <form class="dialog">
        <div class="bar"><button type="button" aria-label="Collapse"><svg width="10" height="10"><circle cx="5" cy="5" r="5" fill="#2b2b2b"/><path d="M2 5h6" stroke="#fff" stroke-width="1.500"/></svg></button><span>MOVE/COPY</span><svg width="12" height="7"><path d="M0 0v7l6-3.500zM6 0v7l6-3.500z" fill="#222"/></svg></div>
        <div class="fields">
          <label for="obj">Move Object</label><div class="c pick"><svg width="18" height="18"><use href="#cyl"/></svg><select id="obj"><option>Bodies...</option></select><svg width="7" height="6"><use href="#caret"/></svg></div>
          <span>Selection</span><div class="c"><button type="button" class="selbtn"><svg width="12" height="16"><path d="M1 0v12l3-2.500 2.500 6 2.500-1-2.500-5.500H11z" fill="#fff" stroke="#777" stroke-width=".8"/></svg>2 selected</button><button type="button" class="clear" aria-label="Clear selection"><svg width="8" height="8"><path d="M.5.5l7 7M7.500.5l-7 7" stroke="#666"/></svg></button></div>
          <span>Move Type</span><div class="c types">
            <button type="button" class="on" aria-label="Free move"><svg width="16" height="16"><circle cx="7" cy="9" r="4" fill="none" stroke="#123"/><path d="M7 2v8h7M7 10l-5 4" fill="none" stroke="#111" stroke-width="1.300"/><path d="M7 0l2 3.500H5zM16 10l-3.500 2v-4zM0 15l1.500-4 3 3z"/></svg></button>
            <button type="button" aria-label="Translate"><svg width="16" height="16"><path d="M7 2v8h7M7 10l-5 4" fill="none" stroke="#222" stroke-width="1.300"/><path d="M7 0l2 3.500H5zM16 10l-3.500 2v-4zM0 15l1.500-4 3 3z" fill="#222"/></svg></button>
            <button type="button" aria-label="Rotate"><svg width="16" height="16"><path d="M12.500 4A6 6 0 1 0 13 11" fill="none" stroke="#333" stroke-width="1.200"/><path d="M14 2v4h-4z" fill="#111"/></svg></button>
            <button type="button" aria-label="Point to point"><svg width="16" height="16"><circle cx="13.500" cy="2.500" r="1.700" fill="none" stroke="#333"/><circle cx="2.500" cy="13.500" r="1.700" fill="none" stroke="#333"/><path d="M12 4l-6 6" stroke="#222" stroke-width="1.300" stroke-dasharray="2 1"/><path d="M4 12l1.500-5L9 10.500z" fill="#111"/></svg></button>
            <button type="button" aria-label="Point to position"><svg width="18" height="16"><circle cx="15" cy="2.500" r="1.700" fill="none" stroke="#333"/><path d="M13.500 4l-5 5" stroke="#222" stroke-width="1.300" stroke-dasharray="2 1"/><path d="M7 10l1-4.500L11.500 9z" fill="#111"/><path d="M4 7v6" stroke="#16a34a" stroke-width="1.500"/><path d="M4 13h5" stroke="#d2283c" stroke-width="1.500"/><path d="M4 13l-3 3" stroke="#1f7fd0" stroke-width="1.500"/></svg></button>
          </div>
          <span>Set Pivot</span><div class="c types"><button type="button" aria-label="Set pivot"><svg width="18" height="18"><use href="#pivot"/></svg></button></div>
          <label for="xd">X Distance</label><div class="c"><input id="xd" type="text" value="0.00 mm"></div>
          <label for="yd">Y Distance</label><div class="c"><input id="yd" type="text" value="0.00 mm"></div>
          <label for="zd">Z Distance</label><div class="c"><input id="zd" type="text" value="0.00 mm"></div>
          <label for="xa">X Angle</label><div class="c"><input id="xa" type="text" value="−15.0 deg"></div>
          <label for="ya">Y Angle</label><div class="c"><input id="ya" type="text" value="0.0 deg"></div>
          <label for="za">Z Angle</label><div class="c"><input id="za" type="text" value="0.0 deg"></div>
          <label for="cc" class="off">Create Copy</label><div class="c"><input id="cc" type="checkbox" disabled></div>
        </div>
        <div class="foot"><svg width="14" height="14"><circle cx="7" cy="7" r="7"/><path d="M5 6h3v5M5 11h5" fill="none" stroke="#fff" stroke-width="1.500"/><circle cx="7.300" cy="3.500" r="1.200" fill="#fff"/></svg><button type="button">OK</button><button type="button">Cancel</button></div>
      </form>
    </div>
  </div>

  <div class="lower">
    <div class="bar comments"><span>COMMENTS</span><button aria-label="Add comment"><svg width="10" height="10"><circle cx="5" cy="5" r="5" fill="#2b2b2b"/><path d="M2 5h6M5 2v6" stroke="#fff" stroke-width="1.300"/></svg></button></div>
    <div class="navbar">
      <button aria-label="Orbit"><svg width="18" height="18"><ellipse cx="9" cy="10" rx="8.300" ry="4" fill="#e9edf2" stroke="#667"/><ellipse cx="9" cy="9" rx="3.500" ry="8.300" fill="none" stroke="#667"/><path d="M9 8v4M7 10h4" stroke="#333"/><path d="M13 3l3 3-4 1z" fill="#333"/></svg><svg width="7" height="6"><use href="#caret"/></svg></button>
      <button aria-label="Look at"><svg width="18" height="18"><path d="M1 6h15v11H1z" fill="#dfe3e8" stroke="#5d6670"/><path d="M4 9h9v5H4z" fill="#aeb7c1" stroke="#6d7680"/><path d="M2 5l2-2 3 1 1-3M9 4h6" fill="none" stroke="#5d6670" stroke-width="1.400"/></svg></button>
      <button aria-label="Pan"><svg width="18" height="18"><path d="M6 17Q5 14 2 11 0 8.500 2 8.500L5 10.500 3.500 4Q4 2.500 5.200 3.500L7 8 7 2Q8 .3 9 2L9.500 8 11 2Q12.500 1 12.700 3L12 8.500 14.500 4.500Q16 4 16 5.500 14 10 14 12T12.500 17z" fill="#fbfbfb" stroke="#555" stroke-width=".9"/></svg></button>
      <button aria-label="Zoom"><svg width="18" height="18"><circle cx="6.500" cy="6.500" r="5.800" fill="#eaf3f6" stroke="#667"/><path d="M11 11l5 6" stroke="#333" stroke-width="2.600"/><path d="M14 3h4M16 1v4M14 7h4" stroke="#444"/></svg></button>
      <button aria-label="Fit"><svg width="18" height="18"><circle cx="7" cy="7" r="6" fill="#f5f7f8" stroke="#667"/><rect x="4.500" y="4.500" width="5" height="5" fill="#fff" stroke="#667"/><path d="M11.500 11.500l5 5" stroke="#333" stroke-width="2.600"/></svg><svg width="7" height="6"><use href="#caret"/></svg></button>
      <button aria-label="Display settings"><svg width="18" height="18"><path d="M.5 1.500h17v11H.5z" fill="#c8ced6" stroke="#667"/><path d="M2 3h14v8H2z" fill="#76a8de"/><path d="M7 13h4v2h3v2H4v-2h3z" fill="#889"/></svg><svg width="7" height="6"><use href="#caret"/></svg></button>
      <button aria-label="Grid and snaps"><svg width="18" height="18"><path d="M.5.5h16v17H.5z" fill="#dde0e3" stroke="#7b828a"/><path d="M3.500 1v16M6.500 1v16M9.500 1v16M12.500 1v16M1 3.500h15M1 6.500h15M1 9.500h15M1 12.500h15M1 15.500h15" stroke="#9da3a9" stroke-width=".8"/><path d="M1 9h15v8H1z" fill="#777" opacity=".35"/></svg><svg width="7" height="6"><use href="#caret"/></svg></button>
      <button aria-label="Viewports"><svg width="18" height="18"><path d="M1 2h16v14H1z" fill="#7fb0e4" stroke="#4f7197"/><path d="M9 2v14M1 9h16" stroke="#3f6186" stroke-width="1.300"/></svg><svg width="7" height="6"><use href="#caret"/></svg></button>
    </div>
    <div class="status"><b>2 Bodies</b><svg width="18" height="17"><path d="M9 1l8.300 15H.7z" fill="#f8d31c" stroke="#6b5a12"/><path d="M9 5v6M9 12.500v2" stroke="#222" stroke-width="1.800"/></svg><svg width="16" height="17"><path d="M8 0a8 8 0 0 1 8 8v9H8A8.500 8.500 0 0 1 8 0z"/><path d="M3 9l7-4M4 11l9-5M5 13l8-4" stroke="#ddd" stroke-width="1.200"/></svg></div>
  </div>
</main>

<footer class="timeline">
  <div class="play">
    <button aria-label="Go to start"><svg width="13" height="14"><path d="M0 0h2v14H0zM13 0v14L2.500 7z" fill="#555"/></svg></button>
    <button aria-label="Step back"><svg width="15" height="12"><path d="M10 0v12L0 6zM12 3h2v6h-2z" fill="#555"/></svg></button>
    <button aria-label="Play"><svg width="13" height="16"><path d="M0 0v16l13-8z" fill="#555"/></svg></button>
    <button aria-label="Step forward"><svg width="15" height="12"><path d="M4 0v12l11-6zM0 3h2v6H0z" fill="#555"/></svg></button>
    <button aria-label="Go to end"><svg width="13" height="14"><path d="M11 0h2v14h-2zM0 0v14l10.500-7z" fill="#555"/></svg></button>
  </div>
  <ol class="track" id="track"></ol>
  <svg class="marker" width="14" height="36"><path d="M0 0h14v4L9 9v27H6V9L0 4z" fill="#5a5a5a"/></svg>
  <button class="prefs" aria-label="Timeline settings"><svg width="18" height="18"><use href="#gear"/></svg></button>
</footer>
<script src="script.js"></script>
</body>
</html>
```
FILE: styles.css
```css
* { box-sizing: border-box; }
html { background: #1b211e; }
body {
  margin: 0; min-height: 100vh; display: flex; flex-direction: column;
  border-radius: 10px; overflow: hidden; background: #fff;
  font: 13px/18px "Noto Sans", "Open Sans", sans-serif; color: #333;
}
button { border: 0; padding: 0; margin: 0; background: none; font: inherit; color: inherit; display: flex; align-items: center; }
svg { display: block; flex: none; }
.defs { position: absolute; width: 0; height: 0; }
a { color: inherit; text-decoration: none; }
input, select { font: inherit; color: inherit; }

.titlebar { display: grid; grid-template-columns: 1fr auto 1fr; align-items: center; height: 31px; background: #efefed; }
.lights { display: flex; gap: 8px; padding-left: 9px; }
.lights i { width: 14px; height: 14px; border-radius: 50%; background: #d6d6d4; border: 1px solid #c4c4c2; }
h1 { margin: 0; font: 600 15px/20px Inter, sans-serif; color: #444; }

.appbar { display: flex; align-items: flex-end; height: 36px; background: #c9c9c9; border-top: 2px solid #b8b8b8; color: #5c5c5c; }
.quick, .account { display: flex; align-items: center; height: 33px; align-self: flex-start; }
.quick { width: 214px; padding-left: 10px; }
.q { gap: 6px; height: 18px; }
.file, .save, .undo { margin-left: 21px; }
.redo { margin-left: 13px; color: #929292; }
.home, .plus { height: 31px; justify-content: center; background: #b7b7b7; border-radius: 4px 4px 0 0; padding-top: 2px; }
.home { width: 44px; margin-right: 4px; }
.plus { width: 31px; margin-left: 5px; }
.doctab { flex: 1; display: flex; align-items: center; height: 31px; padding-right: 7px; background: #f1f1f1; border-radius: 4px 4px 0 0; }
.docname { flex: 1; display: flex; align-items: center; justify-content: center; gap: 6px; color: #333; font-size: 14px; }
.account { width: 223px; padding-left: 13px; }
.jobs { gap: 5px; margin: 0 33px 0 19px; font-size: 14px; color: #444; width: 28px; }
.jobs svg { margin-right: 3px; }
.bell { margin-right: 20px; }
.avatar { width: 28px; height: 28px; margin-left: 20px; justify-content: center; border-radius: 50%; background: #f1f1f1; color: #333; font-size: 14px; }

.ribbon { display: flex; height: 94px; padding-bottom: 3px; background: #f1f1f1; position: relative; }
.ribbon::after { content: ""; position: absolute; left: 0; right: 0; bottom: 3px; border-bottom: 1px solid #d4d4d4; }
.design { width: 122px; height: 67px; margin: 12px 5px 0 13px; padding-bottom: 3px; justify-content: center; gap: 8px; border: 1px solid #cfcfcf; border-radius: 4px; font-weight: 600; }
.tabs { display: flex; gap: 23px; padding-left: 14px; height: 26px; }
.tabs a { padding: 3px 13px 0; border-bottom: 3px solid transparent; }
.tabs .on { color: #0a93d3; border-color: #0a93d3; font-weight: 600; }
.panels { display: flex; margin-top: 3px; }
.panel { display: flex; flex-direction: column; align-items: center; height: 57px; border-right: 1px solid #cfcfcf; }
.panel:last-child { border: 0; }
.icons { display: flex; gap: 12px; padding: 0 10px 0 12px; height: 41px; }
.icons button > svg { width: 36px; height: 36px; overflow: visible; }
.icons button { height: 36px; }
.label { gap: 4px; padding: 0 14px; height: 18px; }

.viewport { position: relative; flex: 1; display: flex; flex-direction: column; justify-content: space-between; padding: 5px 5px 7px; min-height: 655px; }
.model { position: absolute; inset: 0; width: 100%; height: 100%; }
.upper { display: flex; justify-content: space-between; position: relative; }
.bar { display: flex; align-items: center; height: 27px; background: #f1f1f1; border: 1px solid #d2d2d2; border-bottom-width: 2px; color: #555; }
.browser { width: 332px; }
.browser .bar, .comments { padding: 0 11px 0 4px; }
.browser .bar span { flex: 1; padding-left: 10px; }
.comments span { flex: 1; padding-left: 22px; }
.tree { list-style: none; margin: 4px 0 0; padding: 0; height: 453px; display: grid; grid-template-rows: repeat(17, 1fr); }
.tree li { display: flex; align-items: center; }
.l0 { padding-left: 20px; }
.l1 { padding-left: 40px; }
.l2 { padding-left: 80px; }
.tw { margin-right: 12px; }
.l0 .tw { margin-right: 11px; }
.l1 .tw { width: 8px; }
.row { position: relative; display: flex; align-items: center; height: 22px; padding-left: 3px; background: #f1f1f1; }
.row span { padding: 0 11px 0 15px; }
.ey + .fo { margin-left: 10px; }
.g { color: #7b7b7b; }
.root { display: flex; align-items: center; gap: 16px; height: 18px; margin: 0 4px 0 6px; padding: 0 12px 0 5px; background: #949494; color: #fff; }
.act { margin-right: 7px; }
.body { display: flex; align-items: center; gap: 15px; height: 22px; margin-left: 6px; padding: 0 10px 0 4px; }
.sel { background: #0696d7; color: #fff; font-weight: 700; }
.mark::after { content: ""; position: absolute; left: 27px; right: 3px; bottom: 1px; height: 4px; background: repeating-linear-gradient(120deg, #6a84ab 0 3px, transparent 3px 6px); }

.right { display: flex; flex-direction: column; align-items: flex-end; width: 277px; }
.cube { margin: 11px 5px 16px 0; overflow: visible; }
.face { font: 700 11px Roboto, sans-serif; fill: #8d979e; }
.axis { font-size: 13px; }
.dialog { width: 277px; background: #f1f1f1; border: 1px solid #cdcdcd; }
.dialog .bar { border-width: 0 0 1px; height: 27px; padding: 0 4px 0 12px; }
.dialog .bar span { flex: 1; padding-left: 4px; }
.fields { display: grid; grid-template-columns: 89px 1fr; grid-template-rows: repeat(11, 1fr); align-items: center; height: 379px; padding-left: 13px; }
.c { display: flex; align-items: center; }
.fields input[type=text], .pick { width: 138px; height: 30px; background: #fff; border: 1px solid #c6c6c6; padding: 0 3px; }
.pick { gap: 4px; padding-right: 5px; }
.pick select { flex: 1; min-width: 0; appearance: none; border: 0; padding: 0; background: none; }
.selbtn { width: 90px; height: 31px; justify-content: center; gap: 5px; background: #0696d7; color: #fff; margin-right: 13px; }
.types { gap: 6px; }
.types button { width: 26px; height: 31px; justify-content: center; }
.types .on { background: #0696d7; }
.off { color: #b3b3b3; }
.fields input[type=checkbox] { appearance: none; width: 14px; height: 14px; margin: 0 0 0 5px; border: 1px solid #9d9d9d; border-radius: 2px; background: #e6e6e6; }
.foot { display: flex; align-items: center; height: 41px; border-top: 1px solid #cdcdcd; padding: 0 12px 0 15px; }
.foot button { width: 67px; height: 23px; justify-content: center; border: 1px solid #bdbdbd; background: #e7e7e7; color: #666; font-size: 14px; }
.foot svg { margin-right: auto; }
.foot button + button { margin-left: 20px; }

.floatbox { position: absolute; left: 50%; top: 460px; margin-left: -3px; display: flex; align-items: center; height: 26px; width: 163px; background: #f1f1f1; }
.grip { width: 12px; height: 26px; margin-right: 4px; border-right: 1px solid #d0d0d0; background: repeating-linear-gradient(45deg, #e2e2e2 0 1px, #f4f4f4 1px 3px); }
.field { display: flex; justify-content: center; align-items: center; width: 87px; height: 23px; background: #fff; border: 1px solid #d0d0d0; }
.field input { width: 61px; height: 18px; border: 0; padding: 0; text-align: center; background: #9bcbfa; color: #222; }
.dots { margin-left: 12px; }
.dots + .dots { margin-left: 16px; }
.tip { position: absolute; right: 293px; top: 236px; height: 21px; padding: 0 4px; background: #ececec; border: 1px solid #a9a9a9; box-shadow: 0 5px 14px rgba(0, 0, 0, .25); font: 14px/19px Inter, sans-serif; color: #111; }

.lower { position: relative; display: grid; grid-template-columns: 1fr auto 1fr; align-items: end; }
.comments { width: 332px; }
.navbar { display: flex; align-items: center; gap: 8px; height: 27px; margin-bottom: 1px; padding: 0 4px; background: #f1f1f1; }
.navbar button { gap: 4px; }
.status { display: flex; align-items: center; justify-content: flex-end; height: 18px; padding-right: 10px; margin-bottom: 1px; color: #333; }
.status b { margin-right: 20px; }
.status svg + svg { margin-left: 12px; }

.timeline { display: flex; align-items: flex-start; height: 53px; border-top: 2px solid #c3c3c3; background: linear-gradient(#f4f4f4 0, #ececec 50%, #d6d6d6 100%); position: relative; }
.timeline::before { content: ""; position: absolute; inset: 0; background: linear-gradient(90deg, #f2f2f2 0 100px, rgba(242, 242, 242, 0) 190px calc(100% - 170px), #f2f2f2 calc(100% - 100px)); }
.timeline > * { position: relative; }
.play { display: flex; align-items: center; justify-content: space-between; height: 54px; width: 158px; padding: 0 21px 0 13px; }
.track { flex: 1; display: grid; grid-auto-flow: column; grid-auto-columns: minmax(0, 1fr); list-style: none; margin: 0; padding: 0; }
.track li { position: relative; height: 45px; padding-top: 7px; display: flex; align-items: center; flex-direction: column; }
.track button { height: 36px; }
.track li::before { content: ""; position: absolute; left: 0; right: 0; bottom: 0; border-bottom: 2px solid #b9b9b9; }
.track li:first-child::before { left: 50%; }
.track li:last-child::before { right: 50%; }
.track li::after { content: ""; position: absolute; left: 50%; bottom: 0; height: 6px; border-left: 2px solid #b9b9b9; }
.marker { margin: 10px 97px 0 -7px; }
.prefs { height: 54px; margin-right: 14px; color: #777; }
```
FILE: script.js
```javascript
// Features in the order they were modelled: [icon, width, height, count]
const features = [
  ["form", 18, 18, 2], ["move", 16, 16, 1], ["split", 18, 20, 12], ["joint", 18, 12, 18],
  ["move", 16, 16, 6], ["torus", 18, 14, 1], ["remove", 18, 18, 1], ["torus", 18, 14, 1],
  ["copy", 18, 18, 1], ["move", 16, 16, 2], ["patch", 18, 18, 2], ["stitchsm", 18, 18, 2]
];
const track = document.getElementById("track");
for (const [icon, w, h, count] of features) {
  for (let i = 0; i < count; i++) {
    track.insertAdjacentHTML("beforeend",
      `<li><button aria-label="${icon}"><svg width="${w}" height="${h}"><use href="#${icon}"/></svg></button></li>`);
  }
}
```
